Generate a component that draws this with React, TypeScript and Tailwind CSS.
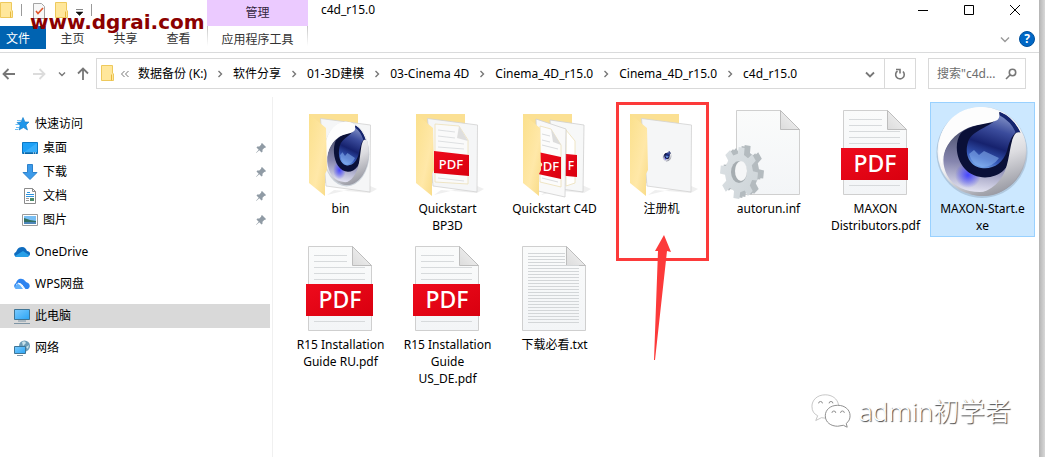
import type { ReactNode } from 'react'

type IconKind = 'bin' | 'folderPdf' | 'folderPdfs' | 'folderApp' | 'inf' | 'pdf' | 'txt' | 'app'

interface FileItem {
  name: string
  icon: IconKind
  selected?: boolean
  marked?: boolean
}

const files: FileItem[] = [
  { name: 'bin', icon: 'bin' },
  { name: 'Quickstart\nBP3D', icon: 'folderPdf' },
  { name: 'Quickstart C4D', icon: 'folderPdfs' },
  { name: '注册机', icon: 'folderApp', marked: true },
  { name: 'autorun.inf', icon: 'inf' },
  { name: 'MAXON\nDistributors.pdf', icon: 'pdf' },
  { name: 'MAXON-Start.e\nxe', icon: 'app', selected: true },
  { name: 'R15 Installation\nGuide RU.pdf', icon: 'pdf' },
  { name: 'R15 Installation\nGuide\nUS_DE.pdf', icon: 'pdf' },
  { name: '下载必看.txt', icon: 'txt' },
]

const crumbs = ['数据备份 (K:)', '软件分享', '01-3D建模', '03-Cinema 4D', 'Cinema_4D_r15.0', 'Cinema_4D_r15.0', 'c4d_r15.0']

const tabs = ['主页', '共享', '查看']

// gradients shared by all the file icons
function Defs() {
  return (
    <svg className="absolute h-0 w-0" aria-hidden="true">
      <defs>
        <linearGradient id="shell" x1="0.2" y1="0" x2="0.7" y2="1">
          <stop offset="0" stopColor="#ffffff" />
          <stop offset="0.5" stopColor="#f3f3f5" />
          <stop offset="0.8" stopColor="#b9bac2" />
          <stop offset="1" stopColor="#8d8f9a" />
        </linearGradient>
        <linearGradient id="arm" x1="0" y1="0" x2="0.3" y2="1">
          <stop offset="0" stopColor="#ffffff" />
          <stop offset="0.5" stopColor="#dcdce0" />
          <stop offset="1" stopColor="#9c9da6" />
        </linearGradient>
        <linearGradient id="bowl" x1="0.5" y1="0" x2="0.4" y2="1">
          <stop offset="0" stopColor="#10164a" />
          <stop offset="0.35" stopColor="#5b5f7e" />
          <stop offset="0.65" stopColor="#8585ae" />
          <stop offset="1" stopColor="#e3e3f2" />
        </linearGradient>
        <radialGradient id="glow">
          <stop offset="0" stopColor="#4646ff" />
          <stop offset="1" stopColor="#4646ff" stopOpacity="0" />
        </radialGradient>
        <linearGradient id="drop" x1="0.7" y1="0" x2="0.4" y2="1">
          <stop offset="0" stopColor="#8493c8" />
          <stop offset="0.3" stopColor="#3b4c9c" />
          <stop offset="0.6" stopColor="#16226e" />
          <stop offset="0.85" stopColor="#3558b8" />
          <stop offset="1" stopColor="#6c9be4" />
        </linearGradient>
        <linearGradient id="page" x1="0" y1="0" x2="0" y2="1">
          <stop offset="0" stopColor="#fafbfb" />
          <stop offset="1" stopColor="#f3f5f7" />
        </linearGradient>
        <linearGradient id="fold" x1="0" y1="1" x2="1" y2="0">
          <stop offset="0" stopColor="#dcdcdc" />
          <stop offset="1" stopColor="#f5f5f5" />
        </linearGradient>
        <linearGradient id="flap" x1="0" y1="0" x2="1" y2="1">
          <stop offset="0" stopColor="#fbe08c" />
          <stop offset="0.6" stopColor="#ffe8a8" />
          <stop offset="1" stopColor="#f8da84" />
        </linearGradient>
        <linearGradient id="red" x1="0" y1="0" x2="1" y2="1">
          <stop offset="0" stopColor="#ee0a1c" />
          <stop offset="1" stopColor="#d9000f" />
        </linearGradient>
        <linearGradient id="gear" x1="0" y1="0" x2="1" y2="1">
          <stop offset="0" stopColor="#dde2e5" />
          <stop offset="1" stopColor="#cdd4d8" />
        </linearGradient>
        <linearGradient id="screen" x1="0" y1="0" x2="1" y2="1">
          <stop offset="0" stopColor="#7ccbff" />
          <stop offset="1" stopColor="#2aa4f4" />
        </linearGradient>
      </defs>
    </svg>
  )
}

function Sphere() {
  return (
    <g>
      <circle cx="49" cy="49.500" r="45.500" fill="#7c8da0" opacity="0.35" />
      <circle cx="49" cy="48.500" r="44.500" fill="url(#shell)" />
      <path d="M66 9C76 13 84 21 88 31L80 44C79 62 73 80 57 88C40 91 22 87 14 72C6 56 12 39 26 29C38 20 60 21 65 15Z" fill="url(#bowl)" />
      <circle cx="35" cy="72" r="13" fill="url(#glow)" />
      <path d="M65 12C75 14 83 22 87 31L79 36C79 50 78 60 71 67C61 77 42 77 32 66C23 56 21 40 28 30C38 21 60 21 65 12Z" fill="#0a1038" />
      <path d="M66 11C62 24 40 25 35 39C31 52 37 63 48 65C60 67 70 60 74 48C76 40 78 34 83 29C80 20 74 13 66 11Z" fill="url(#drop)" />
      <path d="M36 51L41 47L46 52L51 48L66 55Q60 64 49 64Q39 62 36 51Z" fill="#8bb4f0" opacity="0.55" />
      <path d="M67 9Q80 14 87 29L83 30Q78 18 66 12Z" fill="#14246e" />
      <path d="M82 31C85 28 89 29 91 34C98 57 85 84 60 92C52 94 43 93 37 91C54 91 66 82 72 68C77 55 77 38 82 31Z" fill="url(#arm)" />
      <path d="M66 9C67 14 66 17 62 18C53 22 43 20 31 27C17 34 9 48 9 62C3 46 6 30 16 18C29 3 51 0 66 9Z" fill="#fdfdfd" />
    </g>
  )
}

// eight-toothed cog seen slightly from the side
function gearPath(cx: number, cy: number) {
  const points: string[] = []
  for (let i = 0; i < 8; i++) {
    const steps = [
      [-13, 0.74],
      [-9, 1],
      [9, 1],
      [13, 0.74],
    ]
    for (const [offset, r] of steps) {
      const a = ((i * 45 + 8 + offset) * Math.PI) / 180
      points.push(`${(cx + Math.cos(a) * 19 * r).toFixed(1)} ${(cy + Math.sin(a) * 26 * r).toFixed(1)}`)
    }
  }
  return `M${points.join('L')}Z`
}

function Page({ children }: { children?: ReactNode }) {
  return (
    <g>
      <path d="M17.500 7.500H61.500L80.500 26.500V91.500H17.500Z" fill="url(#page)" stroke="#cfcfcf" />
      <path d="M61.500 7.500V26.500H80.500Z" fill="url(#fold)" stroke="#bdbdbd" />
      {children}
    </g>
  )
}

function PdfPage() {
  return (
    <Page>
      <path d="M23 16.500H56M23 22.500H56M23 28.500H74M23 34.500H74M23 40.500H74M23 82.500H74" stroke="#d7dadc" />
      <rect x="15" y="45" width="67" height="32" fill="url(#red)" />
      <text x="49" y="69" textAnchor="middle" fontSize="23" fill="#fff" className="font-['Noto_Sans'] font-medium">
        PDF
      </text>
    </Page>
  )
}

function Folder({ children }: { children: ReactNode }) {
  return (
    <g>
      <path d="M36 92L43 87L79 90L86 86L77 82Z" fill="#e4e4e4" opacity="0.6" />
      <path d="M18 11H67V80H18Z" fill="#fbe093" />
      {children}
      <path d="M18 11L35 25L36 67L34 71V93L18 80Z" fill="url(#flap)" />
    </g>
  )
}

function Sheet() {
  return <path d="M29.500 15.500L79.500 22L79 89L35 83Z" fill="#f5f6f7" stroke="#d2d2d2" strokeWidth="0.8" />
}

function FileIcon({ kind }: { kind: IconKind }) {
  return (
    <svg viewBox="1 0 97 97" className="h-[97px] w-[97px] overflow-visible" aria-hidden="true">
      {kind === 'app' && <Sphere />}
      {kind === 'pdf' && <PdfPage />}
      {kind === 'txt' && (
        <Page>
          {Array.from({ length: 24 }, (_, i) => (
            <path key={i} d={`M23 ${14.5 + i * 3}H${i < 4 ? 60 : 74}`} stroke="#d3d6d8" />
          ))}
        </Page>
      )}
      {kind === 'inf' && (
        <g>
          <Page />
          <path d={gearPath(26, 68)} fill="#b4bbbf" />
          <path d={gearPath(23, 69)} fill="#b4bbbf" />
          <path d={gearPath(20, 70)} fill="url(#gear)" />
          <ellipse cx="20" cy="69" rx="8" ry="11" fill="#a6adb1" />
          <ellipse cx="22" cy="68" rx="6" ry="10" fill="#f5f6f7" />
        </g>
      )}
      {kind === 'bin' && (
        <Folder>
          <Sheet />
          <g transform="translate(31 16) scale(0.5 0.71)">
            <Sphere />
          </g>
        </Folder>
      )}
      {kind === 'folderApp' && (
        <Folder>
          <Sheet />
          <g transform="translate(50 47) scale(0.1 0.12)">
            <Sphere />
          </g>
        </Folder>
      )}
      {kind === 'folderPdf' && (
        <Folder>
          <Sheet />
          <path d="M37 21L61 23L70 37V81L37 79Z" fill="#fafafa" stroke="#ecdfb8" strokeWidth="0.8" />
          <path d="M61 23L59 35L70 38Z" fill="#dedede" />
          <path d="M40 27L57 29M40 33L57 35M40 38L66 41M40 44L66 46M40 75L66 78" stroke="#d5d8da" strokeWidth="0.8" />
          <path d="M36 48L71 52V73L36 70Z" fill="url(#red)" />
          <text x="53" y="66" textAnchor="middle" fontSize="13" fill="#fff" className="font-['Noto_Sans'] font-medium">
            PDF
          </text>
        </Folder>
      )}
      {kind === 'folderPdfs' && (
        <Folder>
          <path d="M45 17L79 22L78 89L49 85Z" fill="#f7f8f8" stroke="#cfcfcf" strokeWidth="0.8" />
          <path d="M61 27L70 38V80L61 83Z" fill="#fff" stroke="#ecdfb8" strokeWidth="0.8" />
          <path d="M51 50L72 52V74L51 72Z" fill="url(#red)" />
          <text x="66" y="67" textAnchor="middle" fontSize="12" fill="#fff" className="font-['Noto_Sans'] font-medium">
            F
          </text>
          <path d="M31 16L61 26L60 94L33 88Z" fill="#f9f9f9" stroke="#cfcfcf" strokeWidth="0.8" />
          <path d="M35 23L46 26L56 42V84L35 79Z" fill="#fcfcfc" stroke="#ecdfb8" strokeWidth="0.8" />
          <path d="M46 26L48 39L56 42Z" fill="#dcdcdc" />
          <path d="M37 31L45 33M37 37L45 39M37 42L53 46M37 75L53 79" stroke="#d0d3d5" strokeWidth="0.8" />
          <path d="M33 49L56 54V76L33 71Z" fill="url(#red)" />
          <text x="42" y="68" textAnchor="middle" fontSize="13" fill="#fff" className="font-['Noto_Sans'] font-medium">
            PDF
          </text>
        </Folder>
      )}
    </svg>
  )
}

function SmallFolder() {
  return (
    <svg viewBox="0 0 14 17" className="h-[17px] w-3.5 shrink-0" aria-hidden="true">
      <path d="M0.500 0.500H11.500V8L12.500 9V15.500H0.500Z" fill="#ffe79b" stroke="#eec95c" />
      <path d="M10.500 9.500V15.500" stroke="#e6b83e" />
    </svg>
  )
}

function Chevron({ className, d = 'M2 4.500L6 8.500L10 4.500' }: { className: string; d?: string }) {
  return (
    <svg viewBox="0 0 12 12" className={`h-3 w-3 shrink-0 ${className}`} fill="none" stroke="currentColor" strokeWidth="1.400" aria-hidden="true">
      <path d={d} />
    </svg>
  )
}

function Pin() {
  return (
    <svg viewBox="0 0 12 12" className="h-3 w-3" fill="#909ba5" aria-hidden="true">
      <path d="M7 1L11 5L10 6L9.500 5.800L7.500 7.800L7.500 9.800L6.500 10.500L4.300 8.300L1.200 11L1 10.800L3.700 7.700L1.500 5.500L2.300 4.600L4.300 4.600L6.300 2.600L6 2Z" />
    </svg>
  )
}

const sideIcons: Record<string, ReactNode> = {
  star: (
    <>
      <path d="M9 1.500L11 6H15L12 9L13.500 14L9.500 11.500L5 14L6 9.500L3 6.500L7 6Z" fill="#1e96ea" stroke="#1179c4" strokeWidth="0.600" />
      <path d="M3 4.500H7M1.500 8.500H5M2 11.500H5M1 13.500H4" stroke="#69bdf5" />
    </>
  ),
  desktop: (
    <>
      <path d="M0.500 2.500H15.500V13.500H0.500Z" fill="#1ea1f7" stroke="#0b78c5" />
      <path d="M1 13L15 3V13Z" fill="#38aefa" />
      <path d="M1 13H15" stroke="#07558c" />
      <path d="M2 13H3M11 13H12M13 13H14" stroke="#fff" />
    </>
  ),
  download: <path d="M5.500 0.500H10.500V8.500H15L8 15.500L1 8.500H5.500Z" fill="#3c9bea" stroke="#2d82cc" />,
  doc: (
    <>
      <path d="M2.500 0.500H10.500L13.500 3.500V15.500H2.500Z" fill="#fff" stroke="#8b8b8b" />
      <path d="M10.500 0.500V3.500H13.500" fill="none" stroke="#8b8b8b" />
      <path d="M5 4.500H8M4 6.500H12M4 8.500H12" stroke="#2e93de" />
      <path d="M4 10.500H7M4 12.500H7" stroke="#9a9a9a" />
      <path d="M8 10H12V13H8Z" fill="#4b8b68" />
    </>
  ),
  picture: (
    <>
      <path d="M0.500 2.500H15.500V13.500H0.500Z" fill="#fff" stroke="#9b9b9b" />
      <path d="M2 4H14V9H2Z" fill="#78bff4" />
      <path d="M2 6L8 8L14 9V12H2Z" fill="#337063" />
      <path d="M2 10H14V12H2Z" fill="#4d86b9" />
    </>
  ),
  onedrive: (
    <>
      <path d="M3 13C0 13-1 9 2 8C3 6 4 3 8 3C11 3 12 5 13 7C16 7 17 10 15 12L13 13Z" fill="#0f6cbf" />
      <path d="M1 12L9 7L15 11Q15 13 13 13H3Q1 13 1 12Z" fill="#28a0e8" />
    </>
  ),
  wps: (
    <>
      <path d="M3 13C0 13-1 9 2 7C3 4 5 2 8 3C10 3 11 5 12 6C16 7 17 11 14 13H11L6 7L2 8Z" fill="#2d84f0" />
      <path d="M1 12C1 8 4 7 6 9L9 13H3Z" fill="#62b1fb" />
      <path d="M4 7Q8 7 11 13" stroke="#fff" fill="none" />
    </>
  ),
  pc: (
    <>
      <path d="M0.500 1.500H15.500V11.500H0.500Z" fill="url(#screen)" stroke="#3f7596" />
      <path d="M4 13H12M0 15.500H16" stroke="#7d94a4" />
    </>
  ),
  network: (
    <>
      <circle cx="10.500" cy="6" r="5.500" fill="#6b9bb6" />
      <path d="M8 2Q11 0 12 3L9 6ZM12 7L15 5L14 9Z" fill="#c9e2ea" />
      <path d="M0.500 6.500H11.500V13.500H0.500Z" fill="url(#screen)" stroke="#3f7596" />
      <path d="M3 15.500H9" stroke="#7d94a4" />
    </>
  ),
}

interface SideItemProps {
  icon: string
  label: string
  child?: boolean
  active?: boolean
}

function SideItem({ icon, label, child, active }: SideItemProps) {
  return (
    <button
      className={`flex h-6 w-full items-center gap-[5px] pr-[3px] text-left ${child ? 'pl-[22px]' : 'pl-3.5'} ${active ? 'bg-[#d9d9d9]' : ''}`}
    >
      <svg viewBox="0 0 16 16" className="h-4 w-4 shrink-0" aria-hidden="true">
        {sideIcons[icon]}
      </svg>
      <span className="flex-1">{label}</span>
      {child && <Pin />}
    </button>
  )
}

function Header() {
  return (
    <header className="flex h-[53px] border-b border-[#dadbdc]">
      <div className="relative w-[207px]">
        <div className="flex h-[26px] items-start pt-0.5">
          <SmallFolder />
          <span className="mt-0.5 ml-[7px] h-3 w-px bg-[#9a9a9a]" />
          <svg viewBox="0 0 12 17" className="ml-[11px] h-[17px] w-3" aria-hidden="true">
            <path d="M0.500 1.500H8.500L11.500 4.500V16.500H0.500Z" fill="#f7f7f7" stroke="#a5a5a5" />
            <path d="M3 9L5 11.500L10 6" fill="none" stroke="#e0562b" strokeWidth="1.600" />
          </svg>
          <span className="ml-[10px]">
            <SmallFolder />
          </span>
          <svg viewBox="0 0 7 7" className="mt-[7px] ml-[7px] h-[7px] w-[7px]" aria-hidden="true">
            <path d="M0 0.500H7M0 3H7L3.500 6.500Z" fill="#111" stroke="#111" strokeWidth="0.500" />
          </svg>
          <span className="mt-0.5 ml-2 h-3 w-px bg-[#9a9a9a]" />
        </div>
        <div className="flex h-[23px]">
          <button className="w-[46px] bg-[#0063b1] pt-0.5 pr-2.5 text-white">文件</button>
          {tabs.map((tab) => (
            <button key={tab} className="w-[53px] pt-0.5 text-[#333]">
              {tab}
            </button>
          ))}
        </div>
        <p className="absolute top-3 left-[30px] z-10 font-['DejaVu_Sans',sans-serif] text-[20px] leading-5 font-bold text-[#8b0000]">
          www.dgrai.com
        </p>
      </div>
      <div className="flex w-[101px] flex-col">
        <div className="flex h-[26px] items-center justify-center bg-[#ebcaff] text-[#33263d]">管理</div>
        <div className="flex h-5">
          <span className="w-px bg-linear-to-b from-[#c4c4c4] to-white" />
          <button className="flex-1 pt-1.5 leading-4 text-[#333]">应用程序工具</button>
          <span className="w-px bg-linear-to-b from-[#c4c4c4] to-white" />
        </div>
      </div>
      <div className="flex-1">
        <div className="flex h-[26px] pr-px">
          <h1 className="flex-1 pt-0.5 pl-[13px]">c4d_r15.0</h1>
          <button aria-label="最小化" className="flex h-5 w-[46px] items-center justify-center">
            <svg viewBox="0 0 12 12" className="h-3 w-3" stroke="#000" fill="none">
              <path d="M1 6.500H11" />
            </svg>
          </button>
          <button aria-label="最大化" className="flex h-5 w-[46px] items-center justify-center">
            <svg viewBox="0 0 12 12" className="h-3 w-3" stroke="#000" fill="none">
              <path d="M1.500 1.500H10.500V10.500H1.500Z" />
            </svg>
          </button>
          <button aria-label="关闭" className="flex h-5 w-[46px] items-center justify-center">
            <svg viewBox="0 0 12 12" className="h-3 w-3" stroke="#000" fill="none">
              <path d="M1 1L11 11M11 1L1 11" />
            </svg>
          </button>
        </div>
        <div className="flex h-[26px] items-center justify-end gap-2 pr-1">
          <Chevron className="text-[#999]" />
          <button aria-label="帮助" className="h-4 w-4 rounded-full border border-[#00509c] bg-[#0067c5] text-xs leading-3.5 font-bold text-white">
            ?
          </button>
        </div>
      </div>
    </header>
  )
}

function AddressBar() {
  return (
    <div className="flex items-center pt-[5px] pr-[13px]">
      <nav className="flex w-24 shrink-0 items-center pl-0.5 text-[#777]">
        <button aria-label="后退">
          <svg viewBox="0 0 14 14" className="h-3.5 w-3.5" fill="none" stroke="currentColor" strokeWidth="1.800">
            <path d="M13 7H1.500M6.500 2L1.500 7L6.500 12" />
          </svg>
        </button>
        <button aria-label="前进" className="ml-4 text-[#dcdcdc]">
          <svg viewBox="0 0 14 14" className="h-3.5 w-3.5" fill="none" stroke="currentColor" strokeWidth="1.800">
            <path d="M1 7H12.500M7.500 2L12.500 7L7.500 12" />
          </svg>
        </button>
        <button aria-label="最近位置" className="ml-2.5">
          <Chevron className="text-[#777]" d="M3 4.500L6 7.500L9 4.500" />
        </button>
        <button aria-label="向上" className="ml-2">
          <svg viewBox="0 0 14 14" className="h-3.5 w-3.5" fill="none" stroke="currentColor" strokeWidth="1.800">
            <path d="M7 13V1.500M2 6.500L7 1.500L12 6.500" />
          </svg>
        </button>
      </nav>
      <div className="flex h-[31px] flex-1 border border-[#d9d9d9]">
        <div className="flex flex-1 items-center pl-1">
          <SmallFolder />
          <svg viewBox="0 0 10 10" className="mr-2 ml-[5px] h-2.5 w-2.5" fill="none" stroke="#777" aria-hidden="true">
            <path d="M4.500 2L1.500 5L4.500 8M8.500 2L5.500 5L8.500 8" />
          </svg>
          {crumbs.map((crumb, i) => (
            <div key={i} className="flex items-center">
              {i > 0 && (
                <span className="flex w-[26px] justify-center">
                  <Chevron className="text-[#777]" d="M4.500 3L7.500 6L4.500 9" />
                </span>
              )}
              <button className="whitespace-nowrap">{crumb}</button>
            </div>
          ))}
          <button aria-label="历史记录" className="mr-2 ml-auto">
            <svg viewBox="0 0 12 12" className="h-3 w-3" fill="none" stroke="#777" strokeWidth="1.800">
              <path d="M2 4.500L6 8.500L10 4.500" />
            </svg>
          </button>
        </div>
        <button aria-label="刷新" className="flex w-[31px] items-center justify-center border-l border-[#d9d9d9]">
          <svg viewBox="0 0 12 12" className="h-3 w-3" fill="none" stroke="#777" strokeWidth="1.600">
            <path d="M3.500 3A4.300 4.300 0 1 0 9 3.500" />
            <path d="M2 1.500H6V5.500" />
          </svg>
        </button>
      </div>
      <label className="ml-3 flex h-[31px] w-[98px] items-center border border-[#d9d9d9] pr-2 pl-2">
        <input aria-label="搜索" placeholder={'搜索"c4d...'} className="w-0 flex-1 outline-none placeholder:text-[#6d6d6d]" />
        <svg viewBox="0 0 12 12" className="h-3 w-3" fill="none" stroke="#777" strokeWidth="1.600" aria-hidden="true">
          <circle cx="7.500" cy="4.500" r="3.200" />
          <path d="M5 7L1 11" />
        </svg>
      </label>
    </div>
  )
}

function Sidebar() {
  return (
    <aside className="flex w-[273px] shrink-0 flex-col gap-2 border-r border-[#f0f0f0] pt-[15px] pr-0.5">
      <div>
        <SideItem icon="star" label="快速访问" />
        <SideItem icon="desktop" label="桌面" child />
        <SideItem icon="download" label="下载" child />
        <SideItem icon="doc" label="文档" child />
        <SideItem icon="picture" label="图片" child />
      </div>
      <SideItem icon="onedrive" label="OneDrive" />
      <SideItem icon="wps" label="WPS网盘" />
      <SideItem icon="pc" label="此电脑" active />
      <SideItem icon="network" label="网络" />
    </aside>
  )
}

function FileTile({ file }: { file: FileItem }) {
  return (
    <div className="relative min-h-[135px] w-[105px]">
      <button
        className={`flex min-h-[135px] w-full flex-col items-center border text-center ${file.selected ? 'border-[#99d1ff] bg-[#cce8ff]' : 'border-transparent'}`}
      >
        <FileIcon kind={file.icon} />
        <span className="leading-[17px] whitespace-pre">{file.name}</span>
      </button>
      {file.marked && (
        <div className="absolute top-0 left-[7px] h-[159px] w-[93px] border-3 border-[#fc3a3a]">
          <svg viewBox="0 0 20 126" className="absolute top-[130px] left-[34px] h-[126px] w-5" fill="#fc3a3a" aria-hidden="true">
            <path d="M11 0L18 17L14 16L2 125H1L5 16L2 16Z" />
          </svg>
        </div>
      )}
    </div>
  )
}

export default function App() {
  return (
    <div className="flex min-h-screen bg-white font-['Noto_Sans','Noto_Sans_CJK_SC',sans-serif] text-xs text-black">
      <Defs />
      <div className="relative flex flex-1 flex-col">
        <Header />
        <AddressBar />
        <div className="mt-2 flex flex-1">
          <Sidebar />
          <main className="flex flex-1 flex-wrap content-start gap-x-0.5 gap-y-px pt-[5px] pl-[15px]">
            {files.map((file) => (
              <FileTile key={file.name} file={file} />
            ))}
          </main>
        </div>
        <div className="absolute right-[28px] bottom-7 flex items-center gap-2">
          <svg viewBox="0 0 42 36" className="h-9 w-10" fill="#fff" stroke="#8a8a8a" aria-hidden="true">
            <path d="M15 1C6 1 1 7 1 13C1 18 3 21 7 23L5 28L11 25Q15 26 18 25L29 12C28 5 22 1 15 1Z" stroke="#aaa" strokeWidth="0.700" />
            <path d="M28 12C20 12 15 17 15 23C15 30 21 34 28 34L34 33L38 35L37 31C40 29 41 26 41 23C41 17 36 12 28 12Z" />
            <path d="M8 10A2 2 0 0 1 12 10M19 10A2 2 0 0 1 23 10M22 20A2 2 0 0 1 26 20M31 20A2 2 0 0 1 35 20" fill="none" />
          </svg>
          <span className="text-[26px] leading-9 font-light text-white [text-shadow:1px_1px_1px_#444]">admin初学者</span>
        </div>
      </div>
      <div className="w-1.5 bg-linear-to-r from-[#b4b4b4] to-[#d8d8d8]" />
    </div>
  )
}
